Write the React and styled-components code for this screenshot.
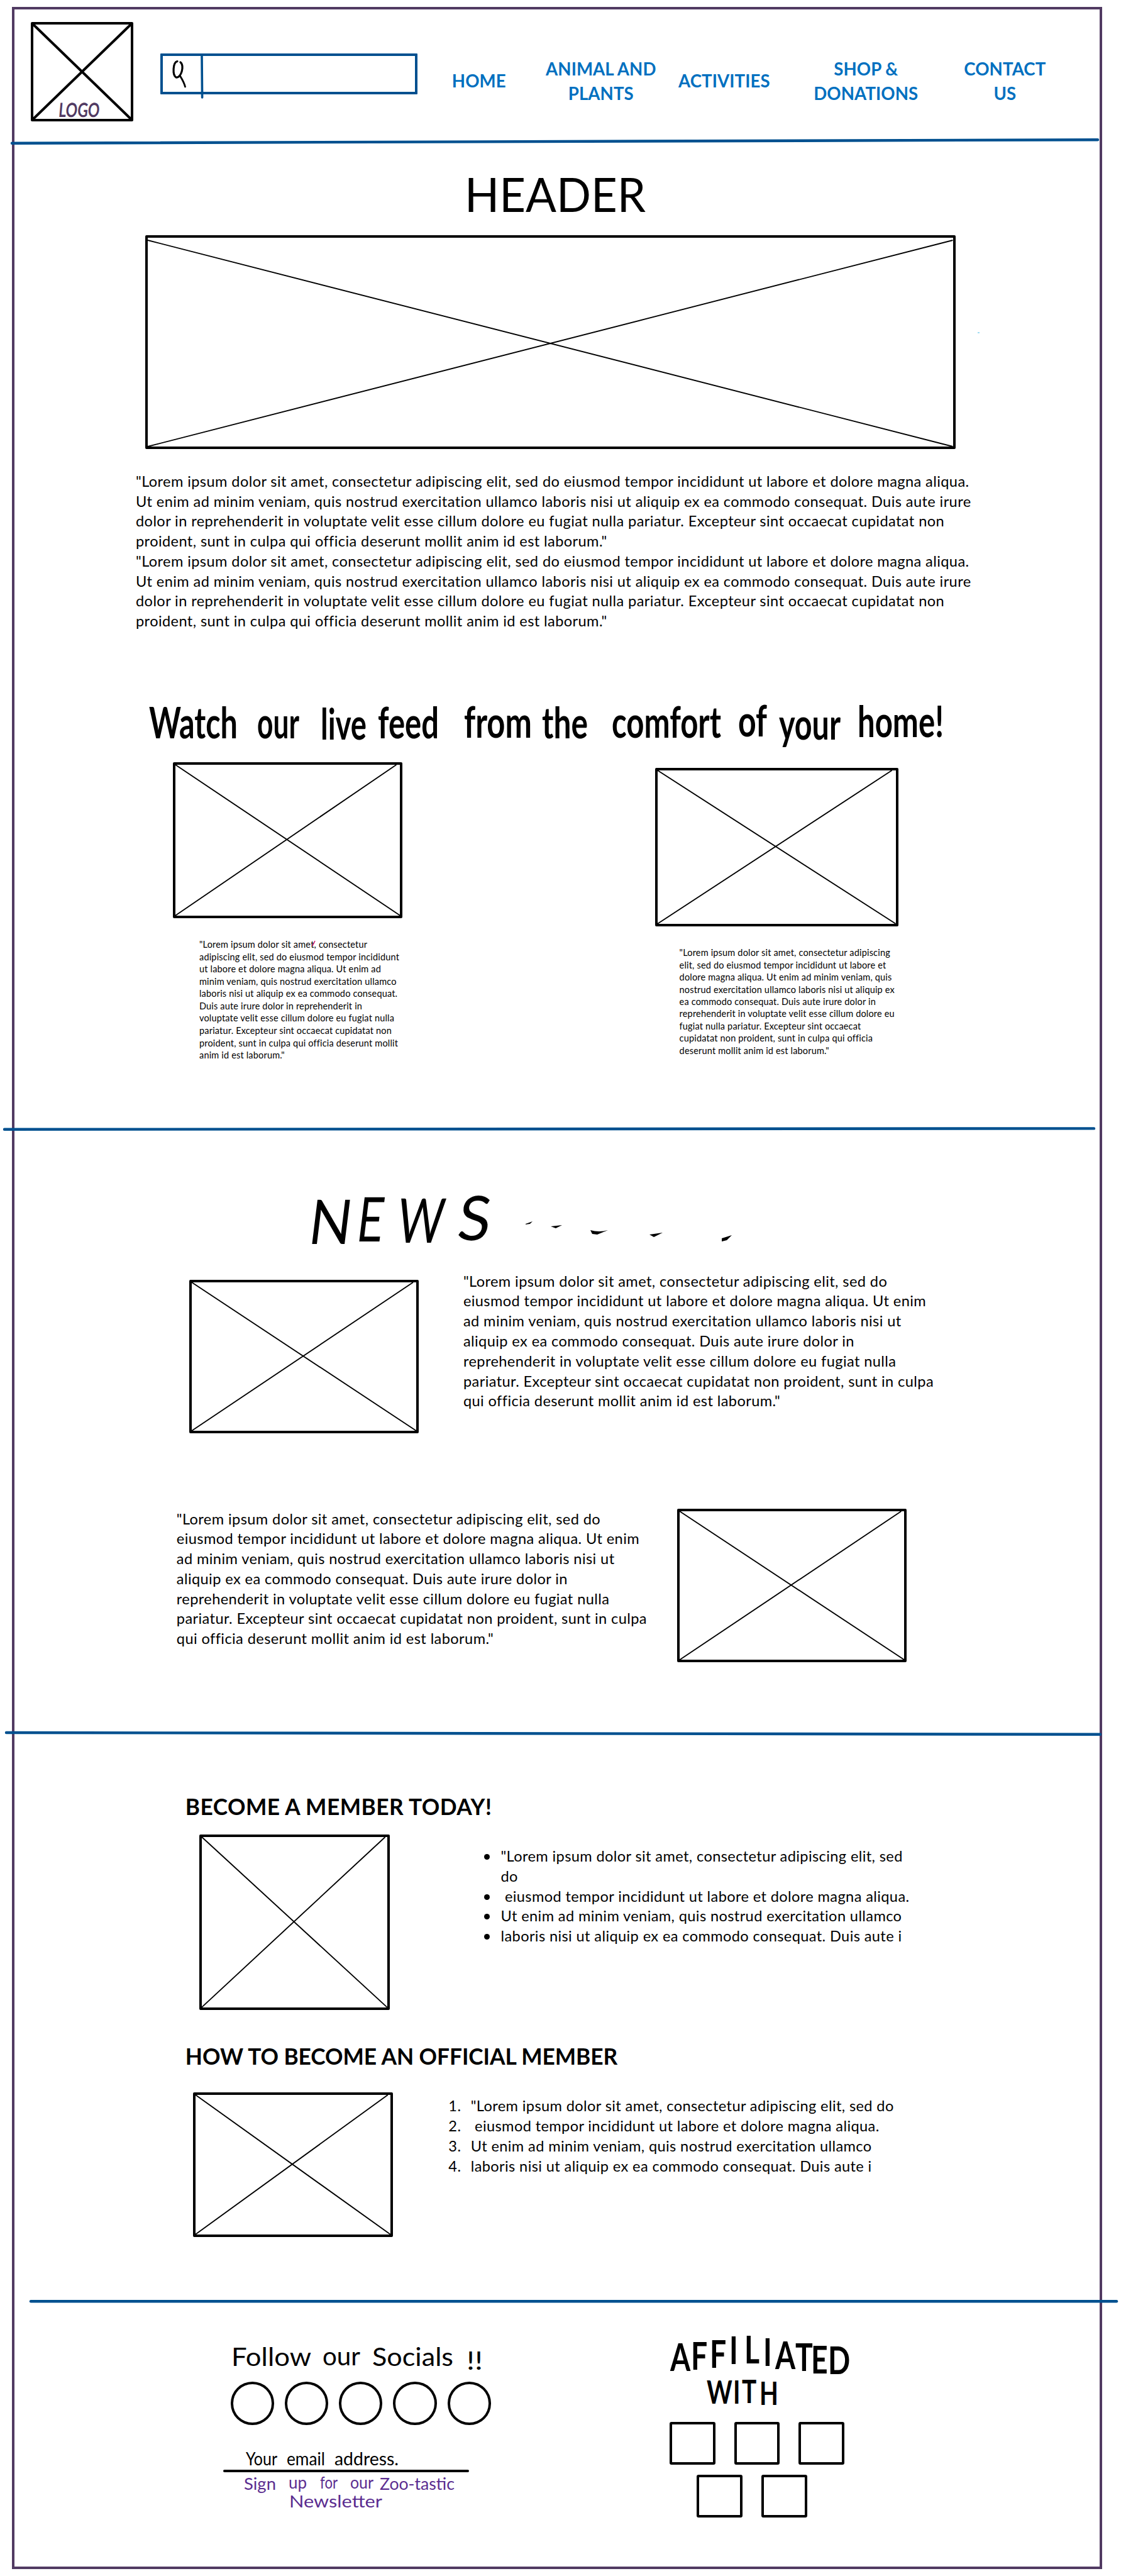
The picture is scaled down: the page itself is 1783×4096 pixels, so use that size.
import React from "react";
import styled, { createGlobalStyle } from "styled-components";

const INK = "#000";
const BLUE = "#00508f";
const PURPLE = "#513a62";
const VIOLET = "#5b2d90";

const GlobalStyle = createGlobalStyle`
  *, *::before, *::after { box-sizing: border-box; }
  body { margin: 0; background: #fff; color: ${INK}; font-family: Lato, "Open Sans", sans-serif; }
  h1, h2, p, ul, ol { margin: 0; padding: 0; }
`;

const Page = styled.div`
  width: 1783px;
  height: 4096px;
  padding: 11px 0 0 19px;
  overflow: hidden;
`;
const Frame = styled.main`
  width: 1734px;
  height: 4074px;
  border: 4px solid ${PURPLE};
`;

const RuleSvg = styled.svg`
  display: block;
  height: 12px;
  width: ${(p) => p.$width}px;
  margin-left: ${(p) => p.$left}px;
  overflow: visible;
`;
function Rule({ left, width, from = 6, to = 6 }) {
  return (
    <RuleSvg $left={left} $width={width} aria-hidden="true">
      <line x1="2" y1={from} x2={width - 2} y2={to} stroke={BLUE} strokeWidth="4.4" strokeLinecap="round" />
    </RuleSvg>
  );
}

const Box = styled.div`
  flex: none;
  position: relative;
  width: ${(p) => p.$w}px;
  height: ${(p) => p.$h}px;
  margin: ${(p) => p.$m || "0"};
  border: 4px solid ${INK};
  border-radius: 2px;
`;
const Cross = styled.svg`
  display: block;
  width: 100%;
  height: 100%;
  overflow: visible;
`;
function Placeholder({ w, h, m, stroke = 1.9, drop = 0, inset = 0, children }) {
  const iw = w - 8;
  const ih = h - 8;
  return (
    <Box $w={w} $h={h} $m={m}>
      <Cross viewBox={`0 0 ${iw} ${ih}`} stroke={INK} strokeWidth={stroke}>
        <path d={`M0 ${drop} L${iw} ${ih} M${iw - inset} ${drop} L0 ${ih}`} fill="none" />
      </Cross>
      {children}
    </Box>
  );
}

const Lettering = styled.svg`
  display: block;
  flex: none;
  width: ${(p) => p.$w}px;
  height: ${(p) => p.$h}px;
  margin: ${(p) => p.$m || "0"};
  overflow: visible;
  font-family: Lato, "Open Sans", sans-serif;
  font-weight: ${(p) => p.$weight || 400};
  font-size: ${(p) => p.$size}px;
  fill: ${(p) => p.$color || INK};
`;
/* Each word is [text, left, right, baseline]; narrow compresses the letter shapes. */
function Words({ items, narrow = 1 }) {
  return (
    <g transform={`scale(${narrow} 1)`}>
      {items.map(([word, x, end, y]) => (
        <text
          key={word + x}
          x={x / narrow}
          y={y}
          textLength={(end - x) / narrow}
          lengthAdjust="spacingAndGlyphs"
        >
          {word}
        </text>
      ))}
    </g>
  );
}

/* ---------- top bar ---------- */
const TopBar = styled.header`
  display: flex;
  align-items: flex-start;
  height: 204px;
  padding: 20px 0 0 26px;
`;
const LogoMark = styled(Lettering)`
  position: absolute;
  left: 39px;
  top: 119px;
`;
const Search = styled.div`
  display: flex;
  width: 409px;
  height: 65px;
  margin: 50px 0 0 43px;
  border: 4px solid ${BLUE};
  border-radius: 1px;
`;
const SearchIcon = styled.svg`
  width: 64px;
  height: 69px;
  overflow: visible;
  fill: none;
  stroke-linecap: round;
`;
const Nav = styled.nav`
  display: grid;
  grid-template-columns: 122px 266px 126px 325px 117px;
  align-items: center;
  justify-items: center;
  height: 78px;
  margin: 54.6px 0 0 36.8px;
`;
const NavItem = styled.a`
  color: #0070c0;
  font-weight: 700;
  font-size: 27.6px;
  line-height: 39.2px;
  letter-spacing: 0.1px;
  text-align: center;
  white-space: pre;
`;

/* ---------- copy ---------- */
const Title = styled.h1`
  font-weight: 400;
  font-size: 76.5px;
  line-height: 90px;
  text-align: center;
  transform: translateX(-3px) scaleX(0.945);
`;
const Copy = styled.p`
  flex: none;
  width: ${(p) => (p.$w ? `${p.$w}px` : "auto")};
  margin: ${(p) => p.$m || "0"};
  font-size: ${(p) => (p.$small ? 14.5 : 23.6)}px;
  line-height: ${(p) => p.$lh || 31.7}px;
  letter-spacing: ${(p) => (p.$small ? 0.18 : 0.4)}px;
  white-space: pre;
`;
const Hero = styled.section`
  height: 1558px;
  padding-top: 31px;
`;
const HeroMedia = styled.div`
  display: flex;
  align-items: flex-start;
  margin: 22px 0 0 208.4px;
`;
const Speck = styled.i`
  width: 3px;
  height: 2px;
  margin: 154px 0 0 35px;
  background: #9fdcf2;
`;
const Feeds = styled.div`
  display: flex;
  align-items: flex-start;
  padding-left: 252px;
`;
const Feed = styled.article`
  width: 390px;
  margin: ${(p) => p.$m || "0"};
`;
const FirstFeedText = styled.div`
  position: relative;
`;
const PinkTick = styled.svg`
  position: absolute;
  left: 221px;
  top: 3px;
  width: 6px;
  height: 10px;
`;

const News = styled.section`
  height: 949px;
  padding-top: 89px;
`;
const NewsRow = styled.div`
  display: flex;
  align-items: flex-start;
  height: 257px;
  margin: ${(p) => p.$m};
`;

const Membership = styled.section`
  height: 892px;
  padding-top: 88.7px;
`;
const Heading = styled.h2`
  margin: ${(p) => p.$m};
  font-weight: 700;
  font-size: 35.3px;
  line-height: 44px;
  letter-spacing: ${(p) => p.$ls || 0}px;
  white-space: nowrap;
`;
const MemberRow = styled.div`
  display: flex;
  align-items: flex-start;
  height: ${(p) => p.$h}px;
  margin: ${(p) => p.$m};
`;
const List = styled.ul`
  margin: ${(p) => p.$m};
  list-style: none;
  font-size: 23.6px;
  line-height: 31.9px;
  letter-spacing: 0.38px;
  white-space: pre;
`;
const Item = styled.li`
  display: flex;
`;
const Marker = styled.span`
  width: ${(p) => p.$w}px;
`;
const Dot = styled.span`
  width: 9px;
  height: 9px;
  margin: 12px 17.5px 0 0;
  border-radius: 50%;
  background: ${INK};
`;

/* ---------- footer ---------- */
const Footer = styled.footer`
  display: flex;
  align-items: flex-start;
`;
const Socials = styled.div`
  width: 440px;
  margin: 54px 0 0 332px;
`;
const Circles = styled.div`
  display: flex;
  gap: 17px;
  margin-left: 11.5px;
`;
const Circle = styled.span`
  width: 69.3px;
  height: 68.5px;
  border: 4px solid ${INK};
  border-radius: 50%;
`;
const EmailLine = styled.div`
  width: 391px;
  height: 4px;
  border-radius: 2px;
  background: ${INK};
`;
const Affiliates = styled.div`
  width: 290px;
  margin: 44px 0 0 270px;
`;
const Squares = styled.div`
  display: flex;
  gap: 30px;
  margin: ${(p) => p.$m};
`;
const Square = styled.span`
  width: 72.7px;
  height: 68px;
  border: 4px solid ${INK};
  border-radius: 3px;
`;

const HERO_COPY = `"Lorem ipsum dolor sit amet, consectetur adipiscing elit, sed do eiusmod tempor incididunt ut labore et dolore magna aliqua.
Ut enim ad minim veniam, quis nostrud exercitation ullamco laboris nisi ut aliquip ex ea commodo consequat. Duis aute irure
dolor in reprehenderit in voluptate velit esse cillum dolore eu fugiat nulla pariatur. Excepteur sint occaecat cupidatat non
proident, sunt in culpa qui officia deserunt mollit anim id est laborum."`;

const FEED_LEFT = `"Lorem ipsum dolor sit amet, consectetur
adipiscing elit, sed do eiusmod tempor incididunt
ut labore et dolore magna aliqua. Ut enim ad
minim veniam, quis nostrud exercitation ullamco
laboris nisi ut aliquip ex ea commodo consequat.
Duis aute irure dolor in reprehenderit in
voluptate velit esse cillum dolore eu fugiat nulla
pariatur. Excepteur sint occaecat cupidatat non
proident, sunt in culpa qui officia deserunt mollit
anim id est laborum."`;

const FEED_RIGHT = `"Lorem ipsum dolor sit amet, consectetur adipiscing
elit, sed do eiusmod tempor incididunt ut labore et
dolore magna aliqua. Ut enim ad minim veniam, quis
nostrud exercitation ullamco laboris nisi ut aliquip ex
ea commodo consequat. Duis aute irure dolor in
reprehenderit in voluptate velit esse cillum dolore eu
fugiat nulla pariatur. Excepteur sint occaecat
cupidatat non proident, sunt in culpa qui officia
deserunt mollit anim id est laborum."`;

const NEWS_COPY = `"Lorem ipsum dolor sit amet, consectetur adipiscing elit, sed do
eiusmod tempor incididunt ut labore et dolore magna aliqua. Ut enim
ad minim veniam, quis nostrud exercitation ullamco laboris nisi ut
aliquip ex ea commodo consequat. Duis aute irure dolor in
reprehenderit in voluptate velit esse cillum dolore eu fugiat nulla
pariatur. Excepteur sint occaecat cupidatat non proident, sunt in culpa
qui officia deserunt mollit anim id est laborum."`;

const BENEFITS = [
  `"Lorem ipsum dolor sit amet, consectetur adipiscing elit, sed\ndo`,
  " eiusmod tempor incididunt ut labore et dolore magna aliqua.",
  "Ut enim ad minim veniam, quis nostrud exercitation ullamco",
  "laboris nisi ut aliquip ex ea commodo consequat. Duis aute i",
];
const STEPS = [
  `"Lorem ipsum dolor sit amet, consectetur adipiscing elit, sed do`,
  " eiusmod tempor incididunt ut labore et dolore magna aliqua.",
  "Ut enim ad minim veniam, quis nostrud exercitation ullamco",
  "laboris nisi ut aliquip ex ea commodo consequat. Duis aute i",
];
const NAV = ["HOME", "ANIMAL AND\nPLANTS", "ACTIVITIES", "SHOP &\nDONATIONS", "CONTACT\nUS"];

/* Per-letter positions for the arched sign; x is pre-divided by the horizontal squeeze. */
const SQUEEZE = 0.76;
const squeeze = (xs) => xs.map((x) => (x / SQUEEZE).toFixed(1)).join(" ");

export default function App() {
  return (
    <Page>
      <GlobalStyle />
      <Frame>
        <TopBar>
          <Placeholder w={163} h={158} stroke={4}>
            <LogoMark $w={66} $h={32} $size={31} $weight={700} $color={PURPLE}>
              <g transform="skewX(-5)">
                <Words items={[["LOGO", 3, 68, 28]]} />
              </g>
            </LogoMark>
          </Placeholder>
          <Search>
            <SearchIcon viewBox="0 0 64 69">
              <path d="M23 8.5 C16 10 15 30 21 34 C29 36 35 15 28 10" stroke={INK} strokeWidth="3.2" />
              <path d="M27 31 C30 36 34 42 35.5 49" stroke={INK} strokeWidth="2.8" />
              <path d="M62 0 L62.6 66" stroke={BLUE} strokeWidth="3.6" />
            </SearchIcon>
          </Search>
          <Nav>
            {NAV.map((label) => (
              <NavItem key={label}>{label}</NavItem>
            ))}
          </Nav>
        </TopBar>
        <Rule left={-6} width={1731} from={8.7} to={3.2} />

        <Hero>
          <Title>HEADER</Title>
          <HeroMedia>
            <Placeholder w={1288.4} h={340} drop={4} />
            <Speck />
          </HeroMedia>
          <Copy $m="36px 0 0 193px">{HERO_COPY + "\n" + HERO_COPY}</Copy>
          <Lettering $w={1290} $h={112} $m="96.3px 0 0 207px" $size={69} $weight={700}>
            <Words
              narrow={0.7}
              items={[
                ["Watch", 7, 148, 74],
                ["our", 179, 246, 74],
                ["live", 280, 353, 76],
                ["feed", 371, 468, 74],
                ["from", 508, 616, 73],
                ["the", 632, 705, 74],
                ["comfort", 743, 917, 73],
                ["of", 944, 990, 71],
                ["your", 1009, 1107, 76],
                ["home!", 1134, 1271, 72],
              ]}
            />
          </Lettering>
          <Feeds>
            <Feed>
              <Placeholder w={365.4} h={247.7} inset={6} />
              <FirstFeedText>
                <Copy $small $lh={19.53} $m="32.7px 0 0 42px">{FEED_LEFT}</Copy>
                <PinkTick viewBox="0 0 6 10">
                  <path d="M5 1 L1 9" stroke="#d0146a" strokeWidth="1.5" />
                </PinkTick>
              </FirstFeedText>
            </Feed>
            <Feed $m="9px 0 0 377px">
              <Placeholder w={386.5} h={251.8} inset={6} />
              <Copy $small $lh={19.4} $m="32.7px 0 0 38.6px">{FEED_RIGHT}</Copy>
            </Feed>
          </Feeds>
        </Hero>
        <Rule left={-18} width={1737} from={6.8} to={5.4} />

        <News>
          <Lettering $w={700} $h={100} $m="0 0 0 467px" $size={98}>
            <g transform="translate(9 0) skewX(-7)">
              <Words
                items={[
                  ["N", 0, 68, 88],
                  ["E", 76, 118, 84],
                  ["W", 140, 214, 86],
                  ["S", 236, 288, 82],
                ]}
              />
            </g>
            <path d="M346 56 Q352 54 357 52 L353 56 L346 57Z M386 60 L404 58 L394 63Z M449 66 Q463 70 477 66 L460 73 L452 72Z M543 73 L564 70 L550 77Z M658 79 L674 74 L666 82 L658 84Z" />
          </Lettering>
          <NewsRow $m="31.7px 0 0 278.4px">
            <Placeholder w={365} h={244} m="13px 70.5px 0 0" inset={5} />
            <Copy $lh={31.8}>{NEWS_COPY}</Copy>
          </NewsRow>
          <NewsRow $m="120.3px 0 0 257.8px">
            <Copy $w={795.8} $m="0.8px 0 0 0">{NEWS_COPY}</Copy>
            <Placeholder w={365.4} h={244.3} inset={5} />
          </NewsRow>
        </News>
        <Rule left={-15} width={1744} from={5} to={7.8} />

        <Membership>
          <Heading $m="0 0 0 271.8px" $ls={0.45}>BECOME A MEMBER TODAY!</Heading>
          <MemberRow $h={278.6} $m="22.7px 0 0 294.4px">
            <Placeholder w={302.6} h={278.6} inset={3} />
            <List $m="18.4px 0 0 150px">
              {BENEFITS.map((t) => (
                <Item key={t}>
                  <Dot />
                  {t}
                </Item>
              ))}
            </List>
          </MemberRow>
          <Heading $m="52.3px 0 0 271.8px" $ls={-0.05}>HOW TO BECOME AN OFFICIAL MEMBER</Heading>
          <MemberRow $h={229.8} $m="35.2px 0 0 284px">
            <Placeholder w={317.8} h={229.8} inset={4} />
            <List as="ol" $m="6px 0 0 88.5px">
              {STEPS.map((t, i) => (
                <Item key={t}>
                  <Marker $w={35.4}>{i + 1}.</Marker>
                  {t}
                </Item>
              ))}
            </List>
          </MemberRow>
        </Membership>
        <Rule left={24} width={1731} from={5.2} to={5.2} />

        <Footer>
          <Socials>
            <Lettering $w={440} $h={67} $size={40}>
              <Words
                items={[
                  ["Follow", 13, 140, 42],
                  ["our", 158, 218, 41],
                  ["Socials", 237, 366, 42],
                  ["!!", 387, 413, 48],
                ]}
              />
            </Lettering>
            <Circles>
              {[0, 1, 2, 3, 4].map((n) => (
                <Circle key={n} />
              ))}
            </Circles>
            <Lettering $w={440} $h={71} $size={28}>
              <Words
                items={[
                  ["Your", 36, 86, 64],
                  ["email", 101, 162, 64],
                  ["address.", 177, 279, 64],
                ]}
              />
            </Lettering>
            <EmailLine />
            <Lettering $w={440} $h={66} $size={26} $color={VIOLET}>
              <Words
                narrow={0.8}
                items={[
                  ["Sign", 33, 84, 28],
                  ["up", 104, 133, 26],
                  ["for", 154, 182, 26],
                  ["our", 202, 239, 26],
                  ["Zoo-tastic", 249, 368, 28],
                  ["Newsletter", 105, 253, 56],
                ]}
              />
            </Lettering>
          </Socials>
          <Affiliates>
            <Lettering $w={290} $h={141} $size={61} $weight={700}>
              <text transform={`scale(${SQUEEZE} 1)`}>
                <tspan
                  x={squeeze([1, 34, 64, 95, 119, 149, 168, 200, 225, 252])}
                  y="60 58 55 49 48 52 57 60 64 65"
                >
                  AFFILIATED
                </tspan>
                <tspan x={squeeze([59, 101, 115, 143])} y="112 112 111 114" fontSize="51">
                  WITH
                </tspan>
              </text>
            </Lettering>
            <Squares $m="0">
              <Square />
              <Square />
              <Square />
            </Squares>
            <Squares $m="16px 0 0 43.3px">
              <Square />
              <Square />
            </Squares>
          </Affiliates>
        </Footer>
      </Frame>
    </Page>
  );
}
